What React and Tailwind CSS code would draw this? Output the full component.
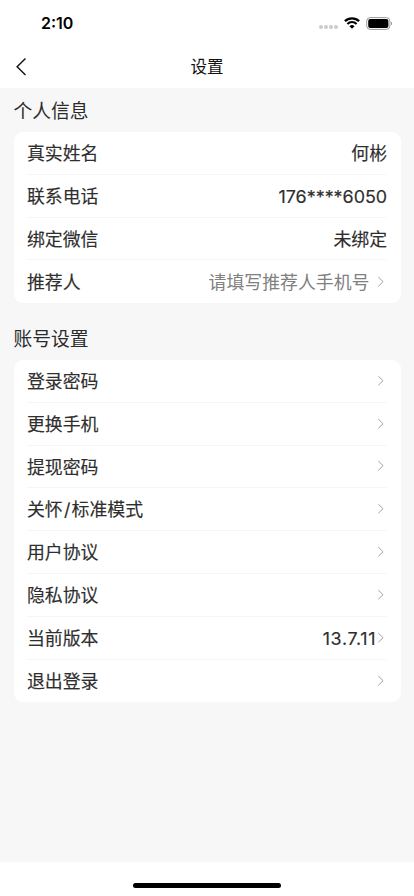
const profileRows = [
  { label: "真实姓名", value: "何彬" },
  { label: "联系电话", value: "176****6050" },
  { label: "绑定微信", value: "未绑定" },
  { label: "推荐人", placeholder: "请填写推荐人手机号", arrow: true },
];

const accountRows = [
  { label: "登录密码", arrow: true },
  { label: "更换手机", arrow: true },
  { label: "提现密码", arrow: true },
  { label: "关怀/标准模式", arrow: true },
  { label: "用户协议", arrow: true },
  { label: "隐私协议", arrow: true },
  { label: "当前版本", value: "13.7.11", valueClass: "mr-px tracking-[0.65px]", arrow: true },
  { label: "退出登录", arrow: true },
];

function Arrow() {
  return (
    <svg className="mr-0.5 h-3 w-2 shrink-0" viewBox="0 0 8 12" fill="none">
      <path d="M1.3 1.1 6.1 5.7 1.3 10.3" stroke="#a3a3a3" strokeWidth="1" />
    </svg>
  );
}

function StatusBar() {
  return (
    <div className="flex h-11 items-center justify-between pl-[41px] pr-[21px] pt-0.5">
      <span className="text-[16px] font-semibold leading-5 text-black">2:10</span>
      <div className="flex items-center">
        {/* Signal */}
        <div className="mr-[6px] mt-2 flex gap-[1.2px]">
          <i className="size-[3.8px] rounded-full bg-[#cccccc]" />
          <i className="size-[3.8px] rounded-full bg-[#cccccc]" />
          <i className="size-[3.8px] rounded-full bg-[#cccccc]" />
          <i className="size-[3.8px] rounded-full bg-[#cccccc]" />
        </div>
        {/* Wifi */}
        <svg className="mr-[6.5px] h-3 w-4" viewBox="0 0 16 12" fill="none" stroke="#000">
          <path d="M.9 4.2a10.2 10.2 0 0 1 14.2 0" strokeWidth="2.3" />
          <path d="M3.4 6.9a6.5 6.5 0 0 1 9.2 0" strokeWidth="2.1" />
          <path d="M5.5 9.2a3.6 3.6 0 0 1 5 0L8 11.8Z" fill="#000" stroke="none" />
        </svg>
        {/* Battery */}
        <svg className="h-[13px] w-[27px]" viewBox="0 0 27 13" fill="none">
          <rect x="0.7" y="0.6" width="23.2" height="11.8" rx="3.5" stroke="#999" />
          <rect x="2.2" y="2.1" width="20.2" height="8.8" rx="2" fill="#000" />
          <path d="M25 4.6c1.5.6 1.5 3.2 0 3.8Z" fill="#999" />
        </svg>
      </div>
    </div>
  );
}

function NavBar() {
  return (
    <div className="grid h-11 grid-cols-[1fr_auto_1fr] items-center pl-4">
      <svg className="h-5 w-3" viewBox="0 0 12 20" fill="none">
        <path d="M9.5 2.4 1.1 10.8l8.4 8.3" stroke="#111" strokeWidth="1.4" />
      </svg>
      <h1 className="-translate-x-2 pt-0.5 text-[16.5px] leading-6 text-[#111]">设置</h1>
    </div>
  );
}

function Row({ label, value, valueClass, placeholder, arrow }) {
  return (
    <div className="flex h-[42.8px] items-center border-b border-[#f6f6f6] text-[17.9px] text-[#2e2e2e] last:h-[42.3px] last:border-b-0">
      <span className="flex-1 pt-[3.3px] [-webkit-text-stroke:0.15px]">
        {label.split("/").map((part, i) => (
          <span key={part}>
            {i > 0 && <span className="px-[1.2px]">/</span>}
            {part}
          </span>
        ))}
      </span>
      {value && (
        <span className={`pt-[3.3px] [-webkit-text-stroke:0.15px] ${valueClass || ""}`}>
          {value}
        </span>
      )}
      {placeholder && (
        <span className="mr-[7.6px] pt-[3.3px] text-[#808080]">{placeholder}</span>
      )}
      {arrow && <Arrow />}
    </div>
  );
}

function Section({ title, rows }) {
  return (
    <section className="mb-[13.3px]">
      <h2 className="flex h-11 items-center pt-[3.5px] text-[18.8px] text-[#2b2b2b]">{title}</h2>
      <div className="rounded-[9px] bg-white px-[13.4px]">
        {rows.map((row) => (
          <Row key={row.label} {...row} />
        ))}
      </div>
    </section>
  );
}

export default function App() {
  return (
    <div className="flex h-[896px] w-[414px] flex-col overflow-hidden bg-white font-[Inter,'Noto_Sans_CJK_SC',sans-serif]">
      <header>
        <StatusBar />
        <NavBar />
      </header>
      <main className="flex-1 bg-[#f7f7f7] px-[13.5px]">
        <Section title="个人信息" rows={profileRows} />
        <Section title="账号设置" rows={accountRows} />
      </main>
      <footer className="flex h-[34px] items-end justify-center pb-2">
        <div className="h-[5px] w-[148px] rounded-full bg-black" />
      </footer>
    </div>
  );
}
